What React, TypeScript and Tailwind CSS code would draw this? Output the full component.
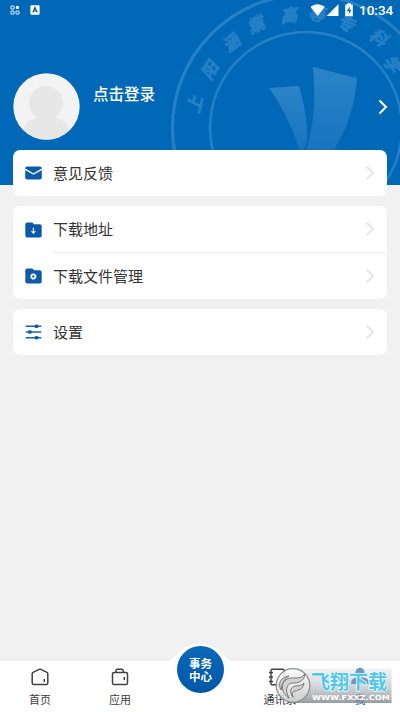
import React from "react";

const sealChars = [
  { c: "上", x: 195, y: 103, r: -77 },
  { c: "阳", x: 210, y: 69, r: -58 },
  { c: "涵", x: 232, y: 42, r: -40 },
  { c: "業", x: 257, y: 24, r: -25 },
  { c: "高", x: 290, y: 15, r: -8 },
  { c: "等", x: 318, y: 14, r: 6 },
  { c: "专", x: 347, y: 24, r: 22 },
  { c: "科", x: 380, y: 38, r: 35 },
  { c: "学", x: 393, y: 65, r: 56 },
];

function Seal() {
  return (
    <svg className="absolute inset-0" width="400" height="185" viewBox="0 0 400 185">
      <defs>
        <linearGradient id="leaf" x1="0" y1="0" x2="0" y2="1">
          <stop offset="0" stopColor="#2b84c9" />
          <stop offset="1" stopColor="#1672be" />
        </linearGradient>
      </defs>
      <g fill="none" stroke="#2580c7">
        <circle cx="306" cy="128" r="133.5" strokeWidth="3.2" />
        <circle cx="306" cy="128" r="96" strokeWidth="2.5" />
      </g>
      <path d="M269 88L299 86Q308 117 307 140L301 158Q294 124 269 88Z" fill="url(#leaf)" />
      <path d="M313 67L357 78Q354 118 334 150L303 158Q318 122 313 67Z" fill="url(#leaf)" />
      <g fill="#2580c7" stroke="#2580c7" strokeWidth="0.700" fontFamily="'Noto Sans CJK SC',sans-serif" fontSize="17" fontWeight="700" textAnchor="middle">
        {sealChars.map((s) => (
          <text key={s.c} transform={`translate(${s.x} ${s.y}) rotate(${s.r}) skewX(-14)`} y="6.500">
            {s.c}
          </text>
        ))}
      </g>
    </svg>
  );
}

function StatusBar() {
  return (
    <div className="relative flex h-5 items-center pl-[10px] pr-[6px] text-white">
      <svg width="10" height="10" viewBox="0 0 10 10" fill="none" stroke="#d8eaf8" strokeWidth="1">
        <path d="M1 1h3v3H1zM1 6h3v3H1zM6 6h3v3H6z" />
        <circle cx="7.4" cy="2.4" r="1.7" fill="#fff" stroke="none" />
      </svg>
      <svg className="ml-[10px]" width="10" height="10" viewBox="0 0 10 10">
        <rect x="0.4" y="0.2" width="9.2" height="9.6" rx="1" fill="#fff" />
        <path d="M2.8 7.4L5 2.5L7.2 7.4M3.5 6H6.5" fill="none" stroke="#174a78" strokeWidth="1.2" />
      </svg>
      <svg className="ml-auto" width="44" height="14" viewBox="0 0 44 14" fill="#fff">
        <path d="M-.5 3.8Q6.700-1.4 13.900 3.8L6.700 13Z" />
        <path d="M27.500 1V13H15.800Z" />
        <path fillRule="evenodd" d="M36.300.2h3.4v1.3h2.1v11.8h-7.6V1.500h2.100ZM38.700 3.600L35.900 8h1.900v3.200L40.400 6.900H38.700Z" />
      </svg>
      <span className="ml-[4px] w-[35px] whitespace-nowrap font-[Roboto,sans-serif] text-[13.5px] font-medium leading-5">10:34</span>
    </div>
  );
}

function Chevron({ className }: { className: string }) {
  return (
    <svg className={className} width="10" height="16" viewBox="0 0 10 16" fill="none" stroke="currentColor">
      <path d="M1.500 1.500L8 8L1.500 14.500" />
    </svg>
  );
}

function MailIcon() {
  return (
    <svg width="17" height="14" viewBox="0 0 17 14">
      <rect x="0.200" y="0.500" width="16.600" height="13" rx="2" fill="#0c5aa9" />
      <path d="M0 3.200L8.500 8L17 3.200" fill="none" stroke="#fff" strokeWidth="1.400" />
    </svg>
  );
}

function FolderIcon({ kind }: { kind: "down" | "gear" }) {
  return (
    <svg width="17" height="16" viewBox="0 0 17 16">
      <path d="M2.200.5H7.300L9 2.300H14.800Q16.700 2.300 16.700 4.200V13.600Q16.700 15.500 14.800 15.500H2.200Q.3 15.500.3 13.600V2.400Q.3.5 2.200.5Z" fill="#0c5aa9" />
      {kind === "down" ? (
        <path d="M8.400 5.800V11M6.500 9.200L8.400 11.100L10.300 9.200" fill="none" stroke="#fff" strokeWidth="1.100" />
      ) : (
        <g fill="none" stroke="#fff">
          <circle cx="8.300" cy="8.500" r="1.900" strokeWidth="1.500" />
          <circle cx="8.300" cy="8.500" r="2.900" strokeWidth="0.800" strokeDasharray="1.200 1.080" />
        </g>
      )}
    </svg>
  );
}

function SlidersIcon() {
  return (
    <svg width="17" height="16" viewBox="0 0 17 16" stroke="#1a64ab" strokeWidth="1.400" fill="#0c5aa9">
      <path d="M.7 2.300H16.300M.7 8H16.300M.7 13.700H16.300" />
      <g stroke="none">
        <rect x="9.500" y="0.600" width="4" height="3.400" rx="1.600" />
        <rect x="3" y="6.300" width="4" height="3.400" rx="1.600" />
        <rect x="9.500" y="12" width="4" height="3.400" rx="1.600" />
      </g>
    </svg>
  );
}

function Row({ icon, label, divided = false }: { icon: React.ReactNode; label: string; divided?: boolean }) {
  return (
    <div className={`flex items-center pl-3 ${divided ? "h-[47px]" : "h-[46px]"}`}>
      <span className="flex w-[28px] shrink-0 items-center">{icon}</span>
      <div className={`flex h-full flex-1 items-center justify-between pr-3 ${divided ? "border-b border-[#eeeeee]" : ""}`}>
        <span className="text-[15px] leading-6 text-[#333333]">{label}</span>
        <Chevron className="stroke-[1.5] text-[#dde0e3]" />
      </div>
    </div>
  );
}

function Tab({ label, children }: { label: string; children: React.ReactNode }) {
  return (
    <div className="flex w-20 flex-col items-center pt-[6px]">
      <div className="flex h-5 items-center justify-center">{children}</div>
      <span className="mt-[4px] text-[11px] leading-4 text-[#3d3d3d]">{label}</span>
    </div>
  );
}

function Watermark() {
  return (
    <svg className="absolute left-[274px] top-[665px]" width="120" height="41" viewBox="0 0 120 41">
      <defs>
        <linearGradient id="plate" x1="0" y1="0" x2="0" y2="1">
          <stop offset="0" stopColor="#e0e3e6" stopOpacity="0.450" />
          <stop offset="0.550" stopColor="#b0b4b8" stopOpacity="0.600" />
          <stop offset="1" stopColor="#808488" stopOpacity="0.800" />
        </linearGradient>
        <linearGradient id="disc" x1="0" y1="0" x2="0" y2="1">
          <stop offset="0" stopColor="#ffffff" stopOpacity="0.850" />
          <stop offset="1" stopColor="#d0d0d0" stopOpacity="0.900" />
        </linearGradient>
      </defs>
      <rect x="20" y="3.500" width="97.500" height="34.500" fill="url(#plate)" />
      <circle cx="19" cy="20.500" r="16.800" fill="url(#disc)" stroke="#888b8e" strokeWidth="1.200" />
      <g fill="#d2d2d2" stroke="#777" strokeWidth="1" strokeLinejoin="round">
        <path d="M15 33C7 28 6 18 13 14C19 11 25 16 31 9C30 17 24 18 18 18C12 19 11 26 15 33Z" />
        <path d="M19 32C14 25 18 21 22 21C26 21 28 20 30 18C29 25 24 25 21 26C18 27 18 29 19 32Z" />
        <path d="M7 25C3 17 8 12 15 11C10 14 8 18 7 25Z" />
      </g>
      <text x="37" y="24" textLength="76" lengthAdjust="spacingAndGlyphs" fill="#56c6e6" stroke="#e8fbff" strokeWidth="1.600" paintOrder="stroke" strokeLinejoin="round" fontFamily="'Noto Sans CJK SC',sans-serif" fontSize="19" fontWeight="700">飞翔下载</text>
      <text x="38" y="35" textLength="78" lengthAdjust="spacingAndGlyphs" fill="#fff" fontFamily="'DejaVu Sans',sans-serif" fontSize="7" fontWeight="700">WWW.FXXZ.COM</text>
    </svg>
  );
}

export default function App() {
  return (
    <div className="relative flex h-[712px] w-[400px] flex-col overflow-hidden bg-[#f1f1f1] font-['Noto_Sans_CJK_SC',sans-serif]">
      <header className="relative h-[185px] shrink-0 overflow-hidden bg-[#0068b7]">
        <Seal />
        <StatusBar />
        <div className="relative mt-[53px] flex items-center pl-[13px] pr-3">
          <svg width="67" height="67" viewBox="0 0 67 67">
            <defs>
              <clipPath id="avatar">
                <circle cx="33.500" cy="33.500" r="33" />
              </clipPath>
            </defs>
            <circle cx="33.500" cy="33.500" r="33.200" fill="#f3f3f3" />
            <g clipPath="url(#avatar)" fill="#e7e7e7">
              <circle cx="33" cy="30" r="17" />
              <path d="M25 42V44Q13 48 11 54V67H56V54Q52 47 41 44V42Z" />
            </g>
          </svg>
          <span className="-mt-[28px] ml-[13px] text-[15.500px] font-medium leading-6 text-white">点击登录</span>
          <Chevron className="ml-auto stroke-2 text-white" />
        </div>
      </header>

      <main className="relative -mt-[35px] flex flex-1 flex-col px-[13px]">
        <section className="rounded-[7px] bg-white">
          <Row icon={<MailIcon />} label="意见反馈" />
        </section>
        <section className="mt-[10px] rounded-[7px] bg-white">
          <Row icon={<FolderIcon kind="down" />} label="下载地址" divided />
          <Row icon={<FolderIcon kind="gear" />} label="下载文件管理" />
        </section>
        <section className="mt-[10px] rounded-[7px] bg-white">
          <Row icon={<SlidersIcon />} label="设置" />
        </section>
      </main>

      <nav className="relative flex h-[51px] shrink-0 bg-white">
        <svg className="absolute left-[165px] top-[-20px]" width="70" height="21" viewBox="0 0 70 21" fill="#fff">
          <path d="M0 21C7 20 10 15 14 11Q35-6 56 11C60 15 63 20 70 21Z" />
        </svg>
        <Tab label="首页">
          <svg width="18" height="18" viewBox="0 0 18 18" fill="none" stroke="#404040" strokeWidth="1.500" strokeLinejoin="round">
            <path d="M1.200 5.700Q1.200 4.800 2 4.400L8.300 1.400Q9 1.100 9.700 1.400L16 4.400Q16.800 4.800 16.800 5.700V15Q16.800 16.600 15.200 16.600H2.800Q1.200 16.600 1.200 15Z" />
            <path d="M13.300 11V14" />
          </svg>
        </Tab>
        <Tab label="应用">
          <svg width="18" height="18" viewBox="0 0 18 18" fill="none" stroke="#404040" strokeWidth="1.500" strokeLinejoin="round">
            <rect x="1.500" y="4.500" width="15" height="12" rx="1.600" />
            <path d="M5 4.500V2.700Q5 1.300 6.400 1.300H10.800Q12.200 1.300 12.200 2.700V4.500M13.300 9V12" />
          </svg>
        </Tab>
        <div className="relative w-20">
          <div className="absolute -top-[15px] left-[17px] flex size-[47px] flex-col items-center justify-center rounded-full bg-linear-to-b from-[#0d68b9] to-[#0057a8] text-[11.500px] font-bold leading-[13px] text-white">
            <span>事务</span>
            <span>中心</span>
          </div>
        </div>
        <Tab label="通讯录">
          <svg className="-ml-2" width="18" height="18" viewBox="0 0 18 18" fill="none" stroke="#404040" strokeWidth="1.400">
            <rect x="4" y="1.300" width="13" height="15.400" rx="1" />
            <path d="M2 4.500H6M2 9H6M2 13.500H6" />
          </svg>
        </Tab>
        <div className="flex w-20 flex-col items-center pt-[6px]">
          <svg width="20" height="20" viewBox="0 0 20 20" fill="#1260ad">
            <circle cx="10" cy="5.500" r="4.500" />
            <path d="M1 17Q1 10.500 7 10.500H13Q19 10.500 19 17Z" />
          </svg>
          <span className="mt-[4px] text-[11px] leading-4 text-[#1260ad]">我</span>
        </div>
      </nav>
      <Watermark />
    </div>
  );
}
